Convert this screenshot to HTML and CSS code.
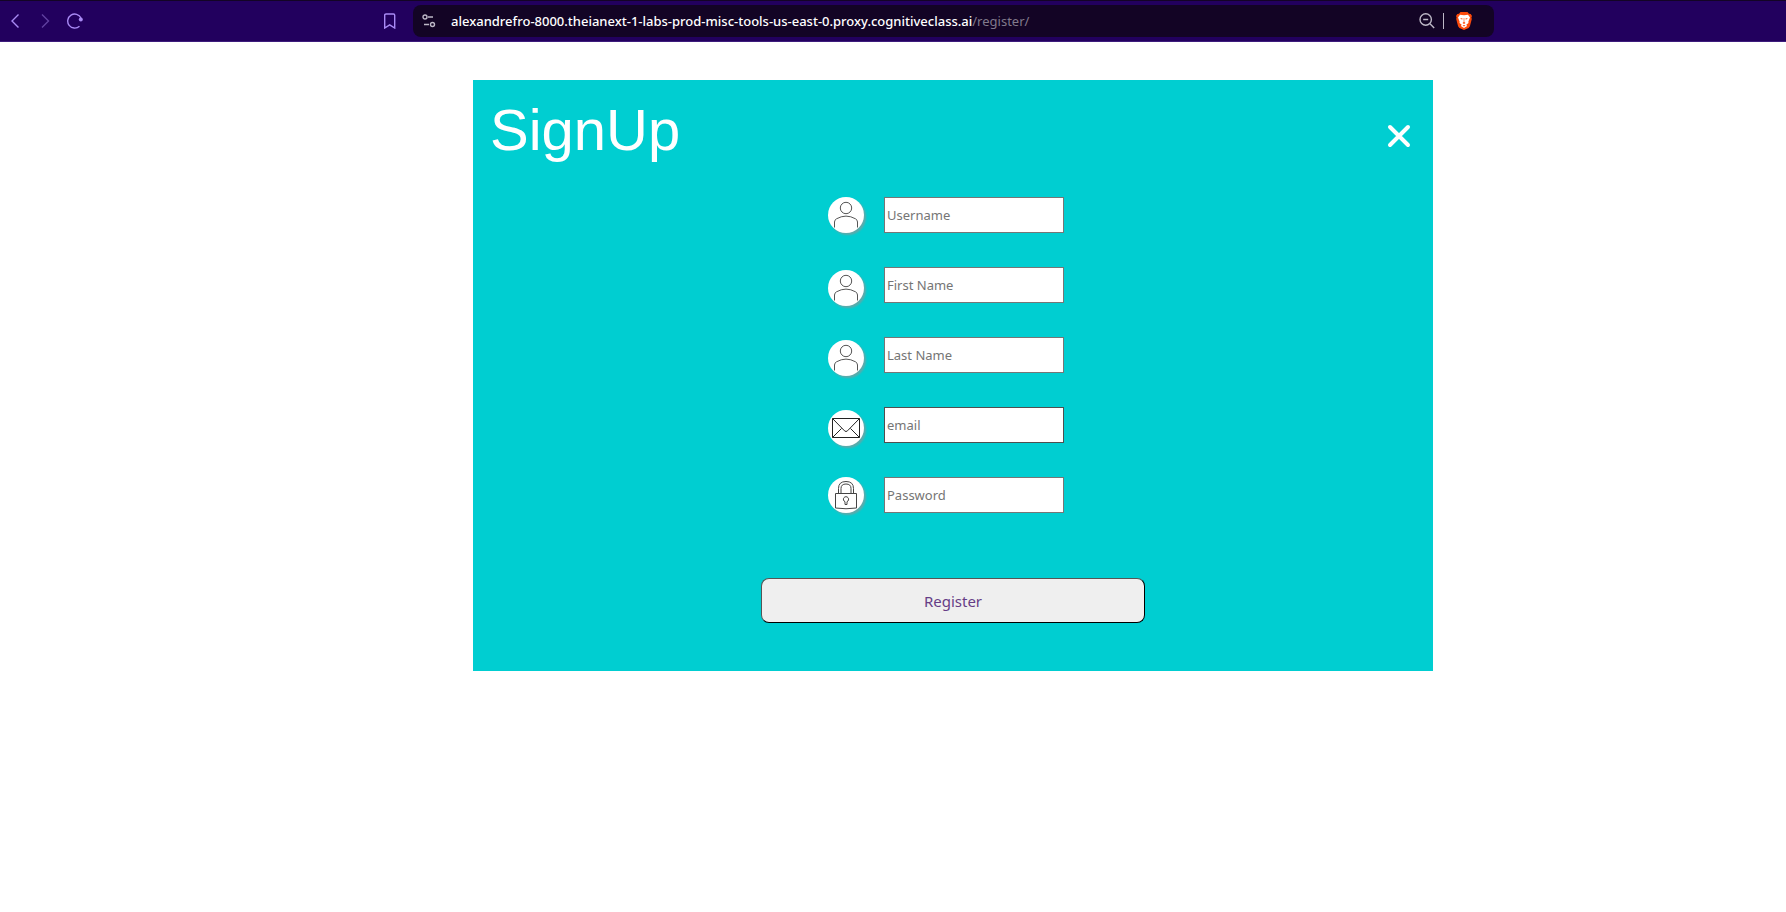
FILE: index.html
```
<!DOCTYPE html>
<html lang="en">
<head>
<meta charset="utf-8">
<title>SignUp</title>
<link rel="stylesheet" href="styles.css">
</head>
<body>
<header class="toolbar">
  <nav class="toolbar-nav" aria-label="History">
    <button class="tool" type="button" aria-label="Back"><svg width="16" height="16" viewBox="0 0 16 16"><path d="M11.500 1.500 5 8l6.500 6.500"/></svg></button>
    <button class="tool tool-dim" type="button" aria-label="Forward"><svg width="16" height="16" viewBox="0 0 16 16"><path d="M5 1.500 11.500 8 5 14.500"/></svg></button>
    <button class="tool" type="button" aria-label="Reload"><svg width="16" height="16" viewBox="0 0 16 16"><path d="M12.500 13.200A7 7 0 1 1 14 5"/><circle class="solid" cx="13.800" cy="6.500" r="2"/></svg></button>
  </nav>
  <button class="tool tool-bookmark" type="button" aria-label="Bookmark"><svg width="14" height="16" viewBox="0 0 14 16"><path d="M1.700 2.200Q1.700 1 3 1h7.500q1.200 0 1.200 1.200V15L6.700 11.800 1.700 15z"/></svg></button>
  <div class="address">
    <svg class="address-site" width="14" height="14" viewBox="0 0 14 14"><circle cx="3" cy="3" r="2"/><path d="M6 3h5M2 10.500h5"/><circle cx="10.500" cy="10.500" r="2"/></svg>
    <p class="address-url">alexandrefro-8000.theianext-1-labs-prod-misc-tools-us-east-0.proxy.cognitiveclass.ai<span class="address-path">/register/</span></p>
    <svg class="address-zoom" width="16" height="16" viewBox="0 0 16 16"><circle cx="6.700" cy="6.500" r="5.700"/><path d="M4.200 6.500h5M11 10.800l4.200 4.200"/></svg>
    <span class="address-rule"></span>
    <svg class="address-shield" width="16" height="18" viewBox="0 0 16 18"><path fill="#fb4a0b" d="M4.500 0h7l1.500 1.700 1.700.2L16 4l-.6 1.600.4 1.400-1.900 7.200L12.600 16 8 18 3.400 16l-1.300-1.800L.2 7l.4-1.400L0 4l1.300-2.100 1.700-.2z"/><path fill="#fff" d="M4 2.800 8 3.300l4-.5 2 2.700-1.600 4.100.1 1.400-2.200 1.700.8 1.400L8 16l-3.100-1.900.8-1.400L3.500 11l.1-1.400L2 5.500z"/><path fill="#fb4a0b" d="m4 6 2.600.5-.5 1.300zM12 6l-2.600.5.500 1.300zM7.700 6h.6v4L9.500 11 8 12l-1.500-1 1.200-1zM6.500 13.600 8 13l1.500.6L8 14.500z"/></svg>
  </div>
</header>

<svg class="symbols" width="0" height="0" aria-hidden="true">
  <symbol id="person" viewBox="0 0 36 36"><circle cx="18" cy="11" r="5.700"/><path d="M6.500 30.500v-5.500Q6.500 23 8.500 21.800 18 16.400 27.500 21.800q2 1.200 2 3.200v5.500"/></symbol>
  <symbol id="mail" viewBox="0 0 36 36"><path d="M4.500 8.500h27v19h-27zM4.500 8.500 16.500 20.800q1.500 1.500 3 0L31.500 8.500M4.500 27.500l9-9M31.500 27.500l-9-9"/></symbol>
  <symbol id="lock" viewBox="0 0 36 36"><path d="M7.500 16.500h21v14.500q-10.500 1.500-21 0zM10.500 16.500v-5q0-7 7.500-7t7.500 7v5M13 16.500v-5q0-4.500 5-4.500t5 4.500v5"/><path d="M17 24.700a2.600 2.600 0 1 1 2 0v2.800h-2z"/></symbol>
</svg>

<main class="page">
  <form class="card">
    <div class="card-head">
      <h1 class="title">SignUp</h1>
      <button class="close" type="button" aria-label="Close"><svg width="24" height="24" viewBox="0 0 24 24"><path d="M3 3l18 18M21 3 3 21"/></svg></button>
    </div>
    <div class="fields">
      <div class="field"><label class="badge" for="username" aria-label="Username"><svg><use href="#person"/></svg></label><input class="box" id="username" type="text" placeholder="Username"></div>
      <div class="field field-low"><label class="badge" for="first" aria-label="First Name"><svg><use href="#person"/></svg></label><input class="box" id="first" type="text" placeholder="First Name"></div>
      <div class="field field-low"><label class="badge" for="last" aria-label="Last Name"><svg><use href="#person"/></svg></label><input class="box" id="last" type="text" placeholder="Last Name"></div>
      <div class="field field-low"><label class="badge badge-dark" for="email" aria-label="email"><svg><use href="#mail"/></svg></label><input class="box box-dark" id="email" type="email" placeholder="email"></div>
      <div class="field"><label class="badge badge-lock" for="password" aria-label="Password"><svg><use href="#lock"/></svg></label><input class="box" id="password" type="password" placeholder="Password"></div>
    </div>
    <button class="register" type="submit">Register</button>
  </form>
</main>
</body>
</html>
```

FILE: styles.css
```
* { box-sizing: border-box; }

body {
  margin: 0;
  background: #fff;
  font-family: "Noto Sans", "Open Sans", sans-serif;
}

svg {
  display: block;
  fill: none;
  stroke: currentColor;
}

.symbols { position: absolute; }

.toolbar {
  display: grid;
  grid-template-columns: 375px 38px minmax(0, 1081px);
  align-items: center;
  height: 42px;
  background: #22005e;
  border-top: 1px solid #130425;
  border-bottom: 1px solid #3d1c7c;
}

.toolbar-nav {
  display: flex;
  gap: 14px;
  padding-left: 7px;
}

.tool {
  padding: 0;
  border: 0;
  background: none;
  color: #a98af5;
  stroke-width: 1.4;
}

.toolbar-nav .tool { width: 16px; }
.tool-dim { color: #6040a0; }
.tool-bookmark { width: 30px; padding-left: 8px; }
.solid { fill: currentColor; stroke: none; }

.address {
  display: flex;
  align-items: center;
  height: 32px;
  padding: 0 22px 0 9px;
  border-radius: 8px;
  background: #130425;
  color: #bdb8c6;
}

.address-site { stroke-width: 1.4; }
.address-zoom { stroke-width: 1.4; }

.address-url {
  flex: 1;
  margin: 0 0 0 15px;
  color: #fff;
  font-size: 13px;
  font-weight: 500;
  white-space: nowrap;
}

.address-path {
  color: #81798b;
  font-weight: 400;
}

.address-rule {
  width: 1px;
  height: 16px;
  margin: 0 12px 0 8px;
  background: #bdb8c6;
}

.address-shield { stroke: none; }

.page {
  padding: 38px 0 0 120px;
}

.card {
  display: flex;
  flex-direction: column;
  align-items: center;
  max-width: 960px;
  margin: 0 auto;
  padding-bottom: 48px;
  background: #00ced1;
}

.card-head {
  display: flex;
  align-items: center;
  justify-content: space-between;
  align-self: stretch;
  padding: 16px 22px 0 17px;
}

.title {
  margin: 0;
  color: #fff;
  font: 400 58px/68px "Liberation Sans", Arial, sans-serif;
}

.close {
  padding: 12px 0 0;
  border: 0;
  background: none;
  color: #fff;
  stroke-width: 4;
  stroke-linecap: round;
}

.fields {
  display: grid;
  gap: 34px;
  margin: 33px 14px 65px 0;
}

.field {
  display: flex;
  gap: 20px;
  height: 36px;
}

.badge {
  width: 36px;
  height: 36px;
  border-radius: 50%;
  background: #fff;
  box-shadow: 2px 2px 2px #5fa9aa;
  color: #555;
}

.badge-dark { color: #222; }
.badge-lock { color: #444; }
.badge svg { width: 36px; height: 36px; }
.field-low .badge { margin-top: 3px; }

.box {
  width: 180px;
  height: 36px;
  padding: 2px;
  border: 1px solid #767676;
  background: #fff;
  font: 13px "Noto Sans", "Open Sans", sans-serif;
}

.box-dark { border-color: #4f4f4f; }
.box::placeholder { color: #757575; }

.register {
  width: 40%;
  height: 45px;
  border: 1px solid #000;
  border-top-color: #555;
  border-left-color: #555;
  border-radius: 8px;
  background: #efefef;
  color: #663d86;
  font: 15px "Noto Sans", "Open Sans", sans-serif;
}
```
